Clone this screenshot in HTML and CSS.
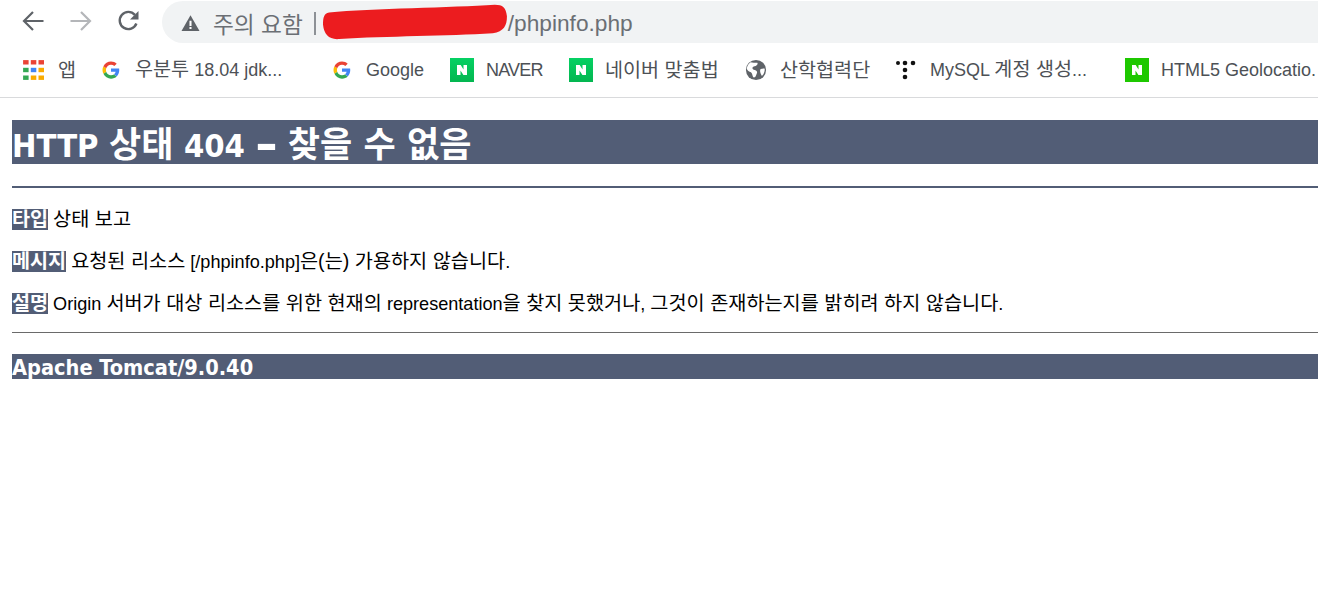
FILE: index.html
```html
<!DOCTYPE html>
<html lang="ko">
<head>
<meta charset="utf-8">
<title>HTTP 상태 404 – 찾을 수 없음</title>
<link rel="stylesheet" href="styles.css">
</head>
<body>
<header class="chrome">
  <div class="toolbar">
    <svg class="nav nav-back" viewBox="0 0 24 24"><path d="M22.5 12H3.500M12 3 3 12l9 9" fill="none" stroke="#5f6368" stroke-width="2.200"/></svg>
    <svg class="nav nav-forward" viewBox="0 0 24 24"><path d="M1.500 12h19M12 3l9 9-9 9" fill="none" stroke="#b4b6b9" stroke-width="2.200"/></svg>
    <svg class="nav nav-reload" viewBox="0 0 24 24"><path d="M19.400 14.500A8.600 8.600 0 1 1 17.900 5.900" fill="none" stroke="#5f6368" stroke-width="2.400"/><path d="M21.500 2v8.500H13z" fill="#5f6368"/></svg>
    <div class="omnibox">
      <svg class="warn" viewBox="0 0 16 16"><path d="M8 1 16 15H0z" fill="#5f6368"/><path d="M7.100 6h1.800v4.600H7.100zM7.100 11.600h1.800v1.700H7.100z" fill="#fff"/></svg>
      <span class="warn-text">주의 요함</span>
      <span class="divider"></span>
      <span class="url">/phpinfo.php</span>
      <svg class="scribble" viewBox="0 0 190 40" preserveAspectRatio="none"><path d="M8 11C50 7 130 6 172 3c8 0 11 3 12 12 0 10-3 16-14 18-45 3-105 3-152 6C8 40 3 34 2 24 2 16 3 12 8 11z" fill="#ec1c1f"/></svg>
    </div>
  </div>
  <nav class="bookmarks">
    <a class="mark w-apps">
      <svg class="icon icon-apps" viewBox="0 0 20 20">
        <g fill="#ea4335"><rect x="1" y="1" width="5" height="4"/><rect x="8" y="1" width="5" height="4"/><rect x="15" y="1" width="5" height="4"/></g>
        <g><rect x="1" y="8" width="5" height="4" fill="#34a853"/><rect x="8" y="8" width="5" height="4" fill="#4285f4"/><rect x="15" y="8" width="5" height="4" fill="#f9ab00"/></g>
        <g><rect x="1" y="15" width="5" height="4" fill="#34a853"/><rect x="8" y="15" width="5" height="4" fill="#f9ab00"/><rect x="15" y="15" width="5" height="4" fill="#f9ab00"/></g>
      </svg>
      <span class="ko">앱</span>
    </a>
    <a class="mark w-ubuntu">
      <svg class="icon icon-g" viewBox="0 0 24 24"><path d="M23 12.300c0-.9-.1-1.700-.2-2.400H12v4.500h6.200c-.3 1.400-1.100 2.600-2.300 3.400l3.600 2.800c2.100-2 3.500-4.900 3.500-8.300z" fill="#4285f4"/><path d="M12 23.500c3.100 0 5.700-1 7.500-2.800l-3.600-2.800c-1 .7-2.300 1.100-3.900 1.100-3 0-5.500-2-6.400-4.700L1.900 17c1.900 3.900 5.800 6.500 10.100 6.500z" fill="#34a853"/><path d="M5.600 14.300c-.5-1.400-.5-3 0-4.500L1.900 6.900c-1.600 3.100-1.600 7 0 10.100z" fill="#fbbc05"/><path d="M12 5c1.700 0 3.200.6 4.400 1.700l3.200-3.200C17.700 1.700 15 .5 12 .5 7.700.5 3.800 3 1.900 6.900l3.700 2.900C6.500 7 9 5 12 5z" fill="#ea4335"/></svg>
      <span><span class="ko">우분투</span> 18.04 jdk...</span>
    </a>
    <a class="mark w-google">
      <svg class="icon icon-g" viewBox="0 0 24 24"><path d="M23 12.300c0-.9-.1-1.700-.2-2.400H12v4.500h6.200c-.3 1.400-1.100 2.600-2.300 3.400l3.600 2.800c2.100-2 3.500-4.900 3.500-8.300z" fill="#4285f4"/><path d="M12 23.500c3.100 0 5.700-1 7.500-2.800l-3.600-2.800c-1 .7-2.300 1.100-3.900 1.100-3 0-5.500-2-6.400-4.700L1.900 17c1.900 3.900 5.800 6.500 10.100 6.500z" fill="#34a853"/><path d="M5.600 14.300c-.5-1.400-.5-3 0-4.500L1.900 6.900c-1.600 3.100-1.600 7 0 10.100z" fill="#fbbc05"/><path d="M12 5c1.700 0 3.200.6 4.400 1.700l3.200-3.200C17.700 1.700 15 .5 12 .5 7.700.5 3.800 3 1.900 6.900l3.700 2.900C6.500 7 9 5 12 5z" fill="#ea4335"/></svg>
      <span>Google</span>
    </a>
    <a class="mark w-naver">
      <svg class="icon icon-n" viewBox="0 0 24 24"><defs><linearGradient id="ng" x1="0" y1="0" x2="0" y2="1"><stop offset="0" stop-color="#05d163"/><stop offset="1" stop-color="#03b650"/></linearGradient></defs><rect width="24" height="24" fill="url(#ng)"/><path d="M7 7h3.700l2.800 4.600V7H17v10h-3.600l-2.900-4.600V17H7z" fill="#fff"/></svg>
      <span class="tight">NAVER</span>
    </a>
    <a class="mark w-spell">
      <svg class="icon icon-n" viewBox="0 0 24 24"><rect width="24" height="24" fill="url(#ng)"/><path d="M7 7h3.700l2.800 4.600V7H17v10h-3.600l-2.900-4.600V17H7z" fill="#fff"/></svg>
      <span class="ko">네이버 맞춤법</span>
    </a>
    <a class="mark w-sanhak">
      <svg class="icon icon-globe" viewBox="0 0 24 24"><circle cx="12" cy="12" r="11" fill="#5f6368"/><path d="M6 3.500c2 .5 5 .5 7.500.5 1 1.500-1 3.500-3 4-2 .5-3 1.500-2 3 1 1.200 3.500 1 4.500 2.500.7 1.500-.5 3-1 4.500-.5 1.500-1.500 2.500-3 2-1-2-1-4-2.500-5.500-2-1-4-2-4.500-4C2 8 4 5 6 3.500zM17 11c1.500-.5 3.500-1 4.500-.5.300 3-1 6-3 8-1-2-3-5-1.500-7.500z" fill="#fff"/></svg>
      <span class="ko">산학협력단</span>
    </a>
    <a class="mark w-mysql">
      <svg class="icon icon-dots" viewBox="0 0 22 22"><g fill="#111"><circle cx="3" cy="4" r="2"/><circle cx="10" cy="4" r="2.300"/><circle cx="18" cy="4" r="2.300"/><circle cx="10" cy="11" r="2.300"/><circle cx="10" cy="18" r="2.300"/></g></svg>
      <span>MySQL <span class="ko">계정 생성</span>...</span>
    </a>
    <a class="mark w-html">
      <svg class="icon icon-n" viewBox="0 0 24 24"><rect width="24" height="24" fill="#1ec800"/><path d="M7 7h3.700l2.800 4.600V7H17v10h-3.600l-2.900-4.600V17H7z" fill="#fff"/></svg>
      <span>HTML5 Geolocatio.</span>
    </a>
  </nav>
</header>
<main class="page">
  <h1 class="title">HTTP <span class="title-ko">상태</span> 404 <span class="dash">–</span> <span class="title-ko">찾을 수 없음</span></h1>
  <hr class="rule-thick">
  <p class="line"><b class="label">타입</b> <span class="ko">상태 보고</span></p>
  <p class="line"><b class="label">메시지</b> <span class="ko">요청된 리소스</span> [/phpinfo.php]<span class="ko">은(는) 가용하지 않습니다</span>.</p>
  <p class="line"><b class="label">설명</b> Origin <span class="ko">서버가 대상 리소스를 위한 현재의</span> representation<span class="ko">을 찾지 못했거나</span>, <span class="ko">그것이 존재하는지를 밝히려 하지 않습니다</span>.</p>
  <hr class="rule-thin">
  <h3 class="footer">Apache Tomcat/9.0.40</h3>
</main>
</body>
</html>
```

FILE: styles.css
```css
* { box-sizing: border-box; }
html, body { margin: 0; padding: 0; background: #fff; overflow: hidden; }
body { width: 1318px; height: 607px; font-family: "Liberation Sans", "Noto Sans CJK KR", sans-serif; }

.ko { font-size: 1.09em; }
.tight { letter-spacing: -.8px; }

.chrome { height: 98px; border-bottom: 1px solid #d9dadc; background: #fff; }

.toolbar { height: 43px; display: flex; align-items: center; padding-top: 1px; }
.nav { width: 24px; height: 24px; flex: none; margin-top: -2px; }
.nav-back { margin-left: 21px; }
.nav-forward { margin-left: 24px; }
.nav-reload { margin-left: 24px; }

.omnibox {
  position: relative;
  flex: 1;
  height: 42px;
  margin-left: 21px;
  padding-top: 2px;
  border-radius: 21px 0 0 21px;
  background: #f1f3f4;
  display: flex;
  align-items: center;
  color: #6b6f74;
  font-size: 22.7px;
}
.warn { width: 19px; height: 18px; margin-left: 19px; flex: none; }
.warn-text { margin-left: 13px; }
.divider { width: 2px; height: 23px; margin-left: 11px; background: #8d9196; }
.url { margin-left: 192px; }
.scribble { position: absolute; left: 159px; top: 1px; width: 192px; height: 38px; }

.bookmarks { height: 54px; display: flex; align-items: center; padding: 0 0 1px 22px; color: #4d5156; font-size: 18px; }
.mark { display: flex; align-items: center; flex: none; white-space: nowrap; overflow: hidden; line-height: 22px; }
.icon { flex: none; }
.icon-apps { width: 22px; height: 22px; margin-right: 14px; }
.icon-g { width: 18px; height: 18px; margin-right: 15px; }
.icon-n { width: 24px; height: 24px; margin-right: 12px; }
.icon-globe { width: 22px; height: 22px; margin-right: 13px; }
.icon-dots { width: 22px; height: 22px; margin-right: 13px; }
.w-apps { width: 80px; }
.w-ubuntu { width: 231px; }
.w-google { width: 117px; }
.w-naver { width: 119px; }
.w-spell { width: 176px; }
.w-sanhak { width: 150px; }
.w-mysql { width: 230px; }
.w-html { width: 193px; }

.page { padding: 22px 0 0 12px; color: #000; }
.title {
  margin: 0;
  height: 44px;
  line-height: 50px;
  background: #525d76;
  color: #fff;
  font-family: "DejaVu Sans", "Noto Sans CJK KR", sans-serif;
  font-stretch: condensed;
  font-size: 32.5px;
  font-weight: 700;
  word-spacing: .3px;
  white-space: nowrap;
}
.title-ko { font-size: 35px; }
.dash { font-size: 1.5em; line-height: 0; vertical-align: -3px; }
.rule-thick { margin: 22px 0 0; height: 2px; border: 0; background: #525d76; }
.line { margin: 21px 0 0; height: 21px; line-height: 20px; font-size: 18.1px; white-space: nowrap; }
.line .ko { font-size: 19.7px; }
.label { display: inline-block; height: 21px; line-height: 21px; background: #525d76; color: #fff; font-size: 19.6px; font-weight: 700; }
.rule-thin { margin: 18px 0 0; height: 1px; border: 0; background: #6a6a6a; }
.footer {
  margin: 21px 0 0;
  height: 25px;
  line-height: 27px;
  background: #525d76;
  color: #fff;
  font-family: "DejaVu Sans", "Noto Sans CJK KR", sans-serif;
  font-stretch: condensed;
  font-size: 21.6px;
  font-weight: 700;
  white-space: nowrap;
}
```
